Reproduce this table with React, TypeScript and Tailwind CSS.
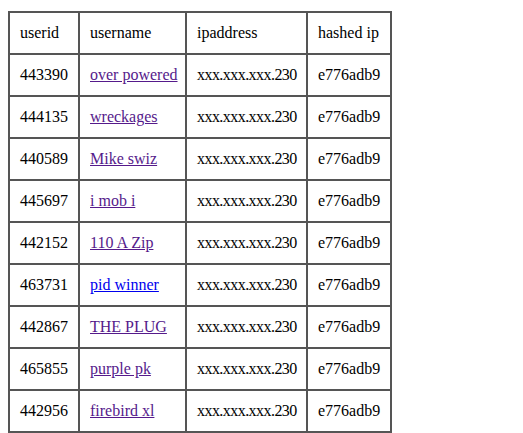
const rows: [string, string, boolean][] = [
  ["443390", "over powered", true],
  ["444135", "wreckages", true],
  ["440589", "Mike swiz", true],
  ["445697", "i mob i", true],
  ["442152", "110 A Zip", true],
  ["463731", "pid winner", false],
  ["442867", "THE PLUG", true],
  ["465855", "purple pk", true],
  ["442956", "firebird xl", true],
];

const cell = "border-2 border-[#555] px-[10px] py-[10px] leading-[20px] whitespace-nowrap text-left align-middle";

export default function App() {
  return (
    <div className="bg-white min-h-screen px-[8px] pt-[11px] font-['Liberation_Serif','Times_New_Roman',serif] text-[16px] text-black">
      <table className="border-collapse border-2 border-[#555] table-fixed w-[382px]">
        <colgroup>
          <col className="w-[70px]" />
          <col className="w-[107px]" />
          <col className="w-[121px]" />
          <col className="w-[84px]" />
        </colgroup>
        <tbody>
          <tr>
            <td className={cell}>userid</td>
            <td className={cell}>username</td>
            <td className={cell}>ipaddress</td>
            <td className={cell}>hashed ip</td>
          </tr>
          {rows.map(([id, name, visited]) => (
            <tr key={id}>
              <td className={cell}>{id}</td>
              <td className={cell}>
                <a href="#" className={visited ? "underline text-[#551a8b]" : "underline text-[#0000ee]"}>
                  {name}
                </a>
              </td>
              <td className={cell + " tracking-[-0.55px]"}>xxx.xxx.xxx.230</td>
              <td className={cell}>e776adb9</td>
            </tr>
          ))}
          <tr>
            <td className={cell + " h-[42px]"}></td>
            <td className={cell}></td>
            <td className={cell}></td>
            <td className={cell}></td>
          </tr>
        </tbody>
      </table>
    </div>
  );
}
